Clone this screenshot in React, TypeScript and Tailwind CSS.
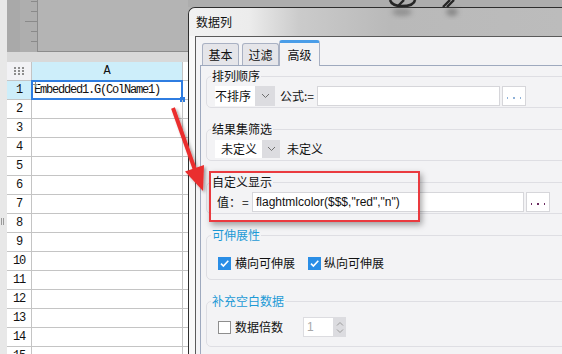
import React from "react";

const CJK = "font-['Noto_Sans_CJK_SC',sans-serif]";
const MONO = "font-['Liberation_Mono',monospace]";

function Chevron({ color = "#6f6f6f" }: { color?: string }) {
  return (
    <svg width="9" height="6" viewBox="0 0 9 6">
      <path d="M1 1l3.5 3.5L8 1" fill="none" stroke={color} strokeWidth="1" />
    </svg>
  );
}

function CheckBox({ checked }: { checked: boolean }) {
  return checked ? (
    <div className="w-[13px] h-[13px] bg-[#2a8ee6] flex items-center justify-center shrink-0">
      <svg width="11" height="11" viewBox="0 0 11 11">
        <path d="M2 5.6l2.4 2.4L9.3 2.8" fill="none" stroke="#fff" strokeWidth="1.6" />
      </svg>
    </div>
  ) : (
    <div className="w-[13px] h-[13px] border border-[#8e8e8e] bg-white shrink-0" />
  );
}

function Dots({ color }: { color: string }) {
  return (
    <div className="flex items-end gap-[5px] pb-[6px]">
      <span className="w-[1.5px] h-[2px]" style={{ background: color }} />
      <span className="w-[1.5px] h-[2px]" style={{ background: color }} />
      <span className="w-[1.5px] h-[2px]" style={{ background: color }} />
    </div>
  );
}

const rows = Array.from({ length: 15 }, (_, i) => i + 1);

export default function App() {
  return (
    <div className={`relative w-[562px] h-[354px] overflow-hidden flex bg-[#b3b3b3] ${CJK}`}>
      {/* far left strip */}
      <div className="w-[7px] shrink-0 bg-[#e8e8e8] flex flex-col">
        <div className="h-[218px]" />
        <div className="flex gap-[1px] pl-[1px]">
          <span className="w-[1px] h-[7px] bg-[#9a9a9a]" />
          <span className="w-[1px] h-[7px] bg-[#9a9a9a]" />
        </div>
      </div>

      {/* spreadsheet */}
      <div className="w-[181px] shrink-0 flex flex-col">
        <div className="h-[52px] shrink-0 flex">
          <div className="w-[13px] bg-[#a9a9a9]" />
          <div className="w-[18px] bg-[#aeaeae] border-r border-[#8c8c8c] flex flex-col items-end pt-[1px]">
            <span className="w-[6px] h-[1px] bg-[#8a8a8a]" />
            <span className="w-[6px] h-[1px] bg-[#8a8a8a] mt-[9px]" />
            <span className="w-[12px] h-[1px] bg-[#8a8a8a] mt-[9px]" />
            <span className="w-[6px] h-[1px] bg-[#8a8a8a] mt-[9px]" />
            <span className="w-[6px] h-[1px] bg-[#8a8a8a] mt-[9px]" />
          </div>
          <div className="flex-1 bg-[#b4b4b4] border-b border-[#8c8c8c]" />
        </div>
        <div className="h-[10px] shrink-0 bg-[#d9d9d9]" />
        <div className={`flex-1 bg-white flex flex-col ${MONO} text-[12px] text-[#111]`}>
          <div className="h-[19px] shrink-0 flex border-b border-[#c4c4c4]">
            <div className="w-[25px] bg-[#f2f2f5] border-r border-[#c4c4c4] flex items-center justify-center">
              <svg width="11" height="8" viewBox="0 0 11 8">
                {[0, 4, 8].map((x) =>
                  [0, 3, 6].map((y) => (
                    <rect key={`${x}-${y}`} x={x} y={y} width="2" height="2" fill="#8d8d8d" />
                  ))
                )}
              </svg>
            </div>
            <div className="w-[151px] bg-[#cdeefa] border-r border-[#c4c4c4] flex items-center justify-center">
              A
            </div>
            <div className="flex-1" />
          </div>
          {rows.map((r) => (
            <div key={r} className="h-[19px] shrink-0 flex border-b border-[#c4c4c4]">
              <div
                className={`w-[25px] border-r border-[#c4c4c4] flex items-center justify-center tracking-[-1.2px] ${
                  r === 1 ? "bg-[#cdeefa]" : "bg-white"
                }`}
              >
                {r}
              </div>
              <div className="relative w-[151px] border-r border-[#c4c4c4] flex items-center pl-[2px] tracking-[-1.2px]">
                {r === 1 && (
                  <>
                    <span>Embedded1.G(ColName1)</span>
                    <div className="absolute left-[-1px] top-[-1px] w-[152px] h-[20px] border-2 border-[#2f7de1]" />
                    <div className="absolute right-[-3px] bottom-[-3px] w-[5px] h-[5px] bg-[#2f7de1]" />
                    <svg className="absolute left-[1px] top-[1px]" width="5" height="5" viewBox="0 0 5 5">
                      <path d="M2.5 0v5M0 2.5h5" stroke="#8a8a8a" strokeWidth="1" />
                    </svg>
                  </>
                )}
              </div>
              <div className="flex-1" />
            </div>
          ))}
        </div>
      </div>

      {/* dialog column */}
      <div className="flex-1 min-w-0 flex flex-col">
        <div className="h-[7px] shrink-0 bg-[#adadad]" />
        <div className="flex-1 flex flex-col border-t border-l border-[#2e2e2e] rounded-tl-[7px] overflow-hidden">
          <div className="h-[28px] shrink-0 flex items-center pl-[7px] bg-[linear-gradient(to_right,#f2f2f2_0px,#ececec_60px,#cbcbcb_110px,#b9b9b9_200px,#bcbcbc_373px)] text-[12px] text-[#111]">
            数据列
          </div>
          <div className="flex-1 flex pl-[6px] bg-[#f8f8f8]">
            <div className="flex-1 flex flex-col border-t border-l border-[#5a5a5a] bg-[#f3f3f5] pl-[4px]">
              {/* tabs */}
              <div className="h-[28px] shrink-0 flex items-end pl-[2px] text-[12px] text-[#111]">
                <div className="w-[37px] h-[22px] border-t border-l border-r border-[#a9b1c3] rounded-t-[3px] bg-[#e5e5e9] flex items-center justify-center">
                  基本
                </div>
                <div className="w-[37px] h-[22px] ml-[3px] border-t border-l border-r border-[#a9b1c3] rounded-t-[3px] bg-[#e5e5e9] flex items-center justify-center">
                  过滤
                </div>
                <div className="relative w-[41px] h-[26px] -mb-px border-t-[3px] border-t-[#4a9de8] border-l border-r border-l-[#a9b1c3] border-r-[#a9b1c3] rounded-t-[3px] bg-[#f3f3f5] flex items-center justify-center">
                  高级
                </div>
              </div>
              {/* panel */}
              <div className="flex-1 flex flex-col border-t border-l border-[#9ea9be] bg-[#f3f3f5] pl-[5px] text-[12px] text-[#111]">
                {/* 排列顺序 */}
                <fieldset className="w-[420px] shrink-0 mt-[3px] border border-[#dedee3] rounded-[5px] pl-[8px] pt-[3px] pb-[1px]">
                  <legend className="text-[12px] leading-[14px] px-[1px] -ml-[4px]">排列顺序</legend>
                  <div className="flex items-center h-[20px]">
                    <div className="w-[40px] h-[20px] bg-white flex items-center">不排序</div>
                    <div className="w-[20px] h-[20px] bg-[#dcdce0] flex items-center justify-center">
                      <Chevron />
                    </div>
                    <span className="ml-[5px] w-[37px]">公式:=</span>
                    <div className="w-[183px] h-[20px] bg-white border border-[#d6d6da]" />
                    <div className="w-[24px] h-[20px] ml-[2px] bg-white border border-[#d6d6da] flex justify-center items-end">
                      <Dots color="#8fb2d8" />
                    </div>
                  </div>
                </fieldset>

                {/* 结果集筛选 */}
                <fieldset className="w-[420px] shrink-0 mt-[14px] border border-[#dedee3] rounded-[5px] pl-[8px] pt-[3px] pb-[1px]">
                  <legend className="text-[12px] leading-[14px] px-[1px] -ml-[4px]">结果集筛选</legend>
                  <div className="flex items-center h-[20px]">
                    <div className="w-[47px] h-[18px] bg-white flex items-center pl-[6px]">未定义</div>
                    <div className="w-[18px] h-[18px] bg-[#dcdce0] flex items-center justify-center">
                      <Chevron />
                    </div>
                    <span className="ml-[7px]">未定义</span>
                  </div>
                </fieldset>

                {/* 自定义显示 */}
                <div className="relative shrink-0 mt-[14px] w-[420px]">
                  <fieldset className="w-[420px] border border-[#dedee3] rounded-[5px] pl-[8px] pt-[3px] pb-[1px]">
                    <legend className="text-[12px] leading-[14px] px-[1px] -ml-[4px]">自定义显示</legend>
                    <div className="flex items-center h-[20px]">
                      <span className="ml-[2px] w-[25px]">值：</span>
                      <span className="w-[10px]">=</span>
                      <div className="w-[272px] h-[20px] bg-white border border-[#d6d6da] flex items-center pl-[3px] font-['Liberation_Sans',sans-serif] text-[12px] text-[#111]">
                        flaghtmlcolor($$$,"red","n")
                      </div>
                      <div className="w-[24px] h-[20px] ml-[2px] bg-white border border-[#d6d6da] flex justify-center items-end">
                        <Dots color="#6b2a60" />
                      </div>
                    </div>
                  </fieldset>
                  <div className="absolute left-[3px] top-[-4px] w-[211px] h-[51px] border-2 border-[#ea3a3f] shadow-[2px_3px_6px_rgba(0,0,0,0.35)]" />
                </div>

                {/* 可伸展性 */}
                <fieldset className="w-[420px] shrink-0 mt-[14px] border border-[#dedee3] rounded-[5px] pl-[8px] pt-[13px] pb-[8px]">
                  <legend className="text-[12px] leading-[14px] px-[1px] -ml-[4px] text-[#1d9ad6]">可伸展性</legend>
                  <div className="flex items-center h-[16px]">
                    <div className="ml-[3px]">
                      <CheckBox checked />
                    </div>
                    <span className="ml-[4px]">横向可伸展</span>
                    <div className="ml-[13px]">
                      <CheckBox checked />
                    </div>
                    <span className="ml-[3px]">纵向可伸展</span>
                  </div>
                </fieldset>

                {/* 补充空白数据 */}
                <fieldset className="w-[420px] shrink-0 mt-[14px] border border-[#dedee3] rounded-[5px] pl-[8px] pt-[9px] pb-[9px]">
                  <legend className="text-[12px] leading-[14px] px-[1px] -ml-[4px] text-[#1d9ad6]">补充空白数据</legend>
                  <div className="flex items-center h-[20px]">
                    <div className="ml-[3px]">
                      <CheckBox checked={false} />
                    </div>
                    <span className="ml-[4px]">数据倍数</span>
                    <div className="ml-[20px] flex h-[20px]">
                      <div className="w-[31px] h-[20px] bg-white border border-[#dcdce0] flex items-center pl-[3px] font-['Liberation_Sans',sans-serif] text-[12px] text-[#a8a8a8]">
                        1
                      </div>
                      <div className="w-[12px] h-[20px] bg-[#dcdce0] flex flex-col items-center justify-center gap-[3px]">
                        <svg width="8" height="5" viewBox="0 0 8 5">
                          <path d="M1 4.5L4 1.5l3 3" fill="none" stroke="#9a9a9a" strokeWidth="1" />
                        </svg>
                        <svg width="8" height="5" viewBox="0 0 8 5">
                          <path d="M1 .5L4 3.5l3-3" fill="none" stroke="#9a9a9a" strokeWidth="1" />
                        </svg>
                      </div>
                    </div>
                  </div>
                </fieldset>
              </div>
            </div>
          </div>
        </div>
      </div>

      {/* background toolbar icons seen through top */}
      <svg className="absolute left-[380px] top-0 pointer-events-none" width="100" height="24" viewBox="0 0 100 24">
        <defs>
          <filter id="bl" x="-50%" y="-50%" width="200%" height="200%">
            <feGaussianBlur stdDeviation="2.5" />
          </filter>
        </defs>
        <ellipse cx="22" cy="12" rx="10" ry="4" fill="#6a6a6a" opacity="0.5" filter="url(#bl)" />
        <ellipse cx="72" cy="12" rx="6" ry="4" fill="#555" opacity="0.5" filter="url(#bl)" />
        <path d="M10 0 Q12 6 22 6 Q34 6 35 0" fill="none" stroke="#262626" strokeWidth="2.6" />
        <path d="M18 6 L24 0" stroke="#262626" strokeWidth="2.4" />
        <path d="M63 7 L70 0 M67 7 L74 0" stroke="#262626" strokeWidth="2.4" />
      </svg>

      {/* red arrow annotation */}
      <svg className="absolute left-0 top-0 pointer-events-none" width="562" height="354" viewBox="0 0 562 354">
        <defs>
          <filter id="sh" x="-20%" y="-20%" width="140%" height="140%">
            <feDropShadow dx="2" dy="2" stdDeviation="1.5" floodColor="#000" floodOpacity="0.35" />
          </filter>
        </defs>
        <g filter="url(#sh)">
          <line x1="173" y1="108" x2="195" y2="170" stroke="#ea2f2f" strokeWidth="4" />
          <polygon points="203,191 185,171.5 204,165" fill="#ea2f2f" />
        </g>
      </svg>
    </div>
  );
}
